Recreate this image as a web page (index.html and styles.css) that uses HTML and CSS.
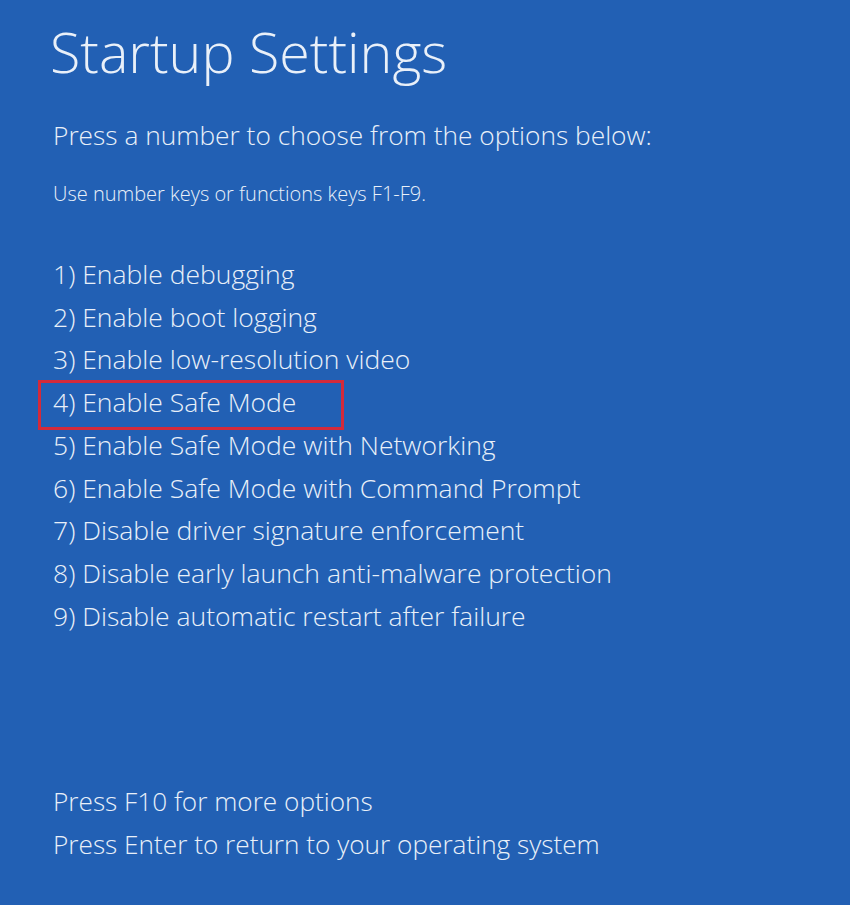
FILE: index.html
```html
<!DOCTYPE html>
<html lang="en">
<head>
    <meta charset="UTF-8">
    <meta name="viewport" content="width=device-width, initial-scale=1.0">
    <title>Startup Settings</title>
    <link rel="stylesheet" href="styles.css">
</head>
<body>
    <div class="screen">
        <h1>Startup Settings</h1>
        <p class="lead">Press a number to choose from the options below:</p>
        <p class="hint">Use number keys or functions keys F1-F9.</p>

        <ul class="options">
            <li>1) Enable debugging</li>
            <li>2) Enable boot logging</li>
            <li>3) Enable low-resolution video</li>
            <li class="selected">4) Enable Safe Mode</li>
            <li>5) Enable Safe Mode with Networking</li>
            <li>6) Enable Safe Mode with Command Prompt</li>
            <li>7) Disable driver signature enforcement</li>
            <li>8) Disable early launch anti-malware protection</li>
            <li>9) Disable automatic restart after failure</li>
        </ul>

        <div class="footer">
            <p>Press F10 for more options</p>
            <p>Press Enter to return to your operating system</p>
        </div>
    </div>
</body>
</html>
```

FILE: styles.css
```css
body {
    margin: 0;
    height: 905px;
    background: #2260b4;
    color: #e9f0f9;
    font-family: 'Open Sans', 'Noto Sans', sans-serif;
    font-weight: 300;
    overflow: hidden;
}

.screen {
    padding: 12px 0 0 53px;
}

h1 {
    font-size: 55.6px;
    font-weight: 300;
    line-height: 80px;
    margin: 0 0 0 -3px;
}

.lead {
    font-size: 26.3px;
    line-height: 34px;
    margin: 26px 0 0;
}

.hint {
    font-size: 20px;
    line-height: 26px;
    margin: 29px 0 0;
}

.options {
    list-style: none;
    padding: 0;
    margin: 46px 0 0;
}

.options li {
    font-size: 26.5px;
    line-height: 42.7px;
}

.selected {
    position: relative;
}

.selected::after {
    content: '';
    position: absolute;
    left: -15px;
    top: -1px;
    width: 300px;
    height: 44px;
    border: 3px solid #d42a3a;
}

.footer {
    margin-top: 143px;
}

.footer p {
    font-size: 26.2px;
    line-height: 42.7px;
    margin: 0;
}
```
